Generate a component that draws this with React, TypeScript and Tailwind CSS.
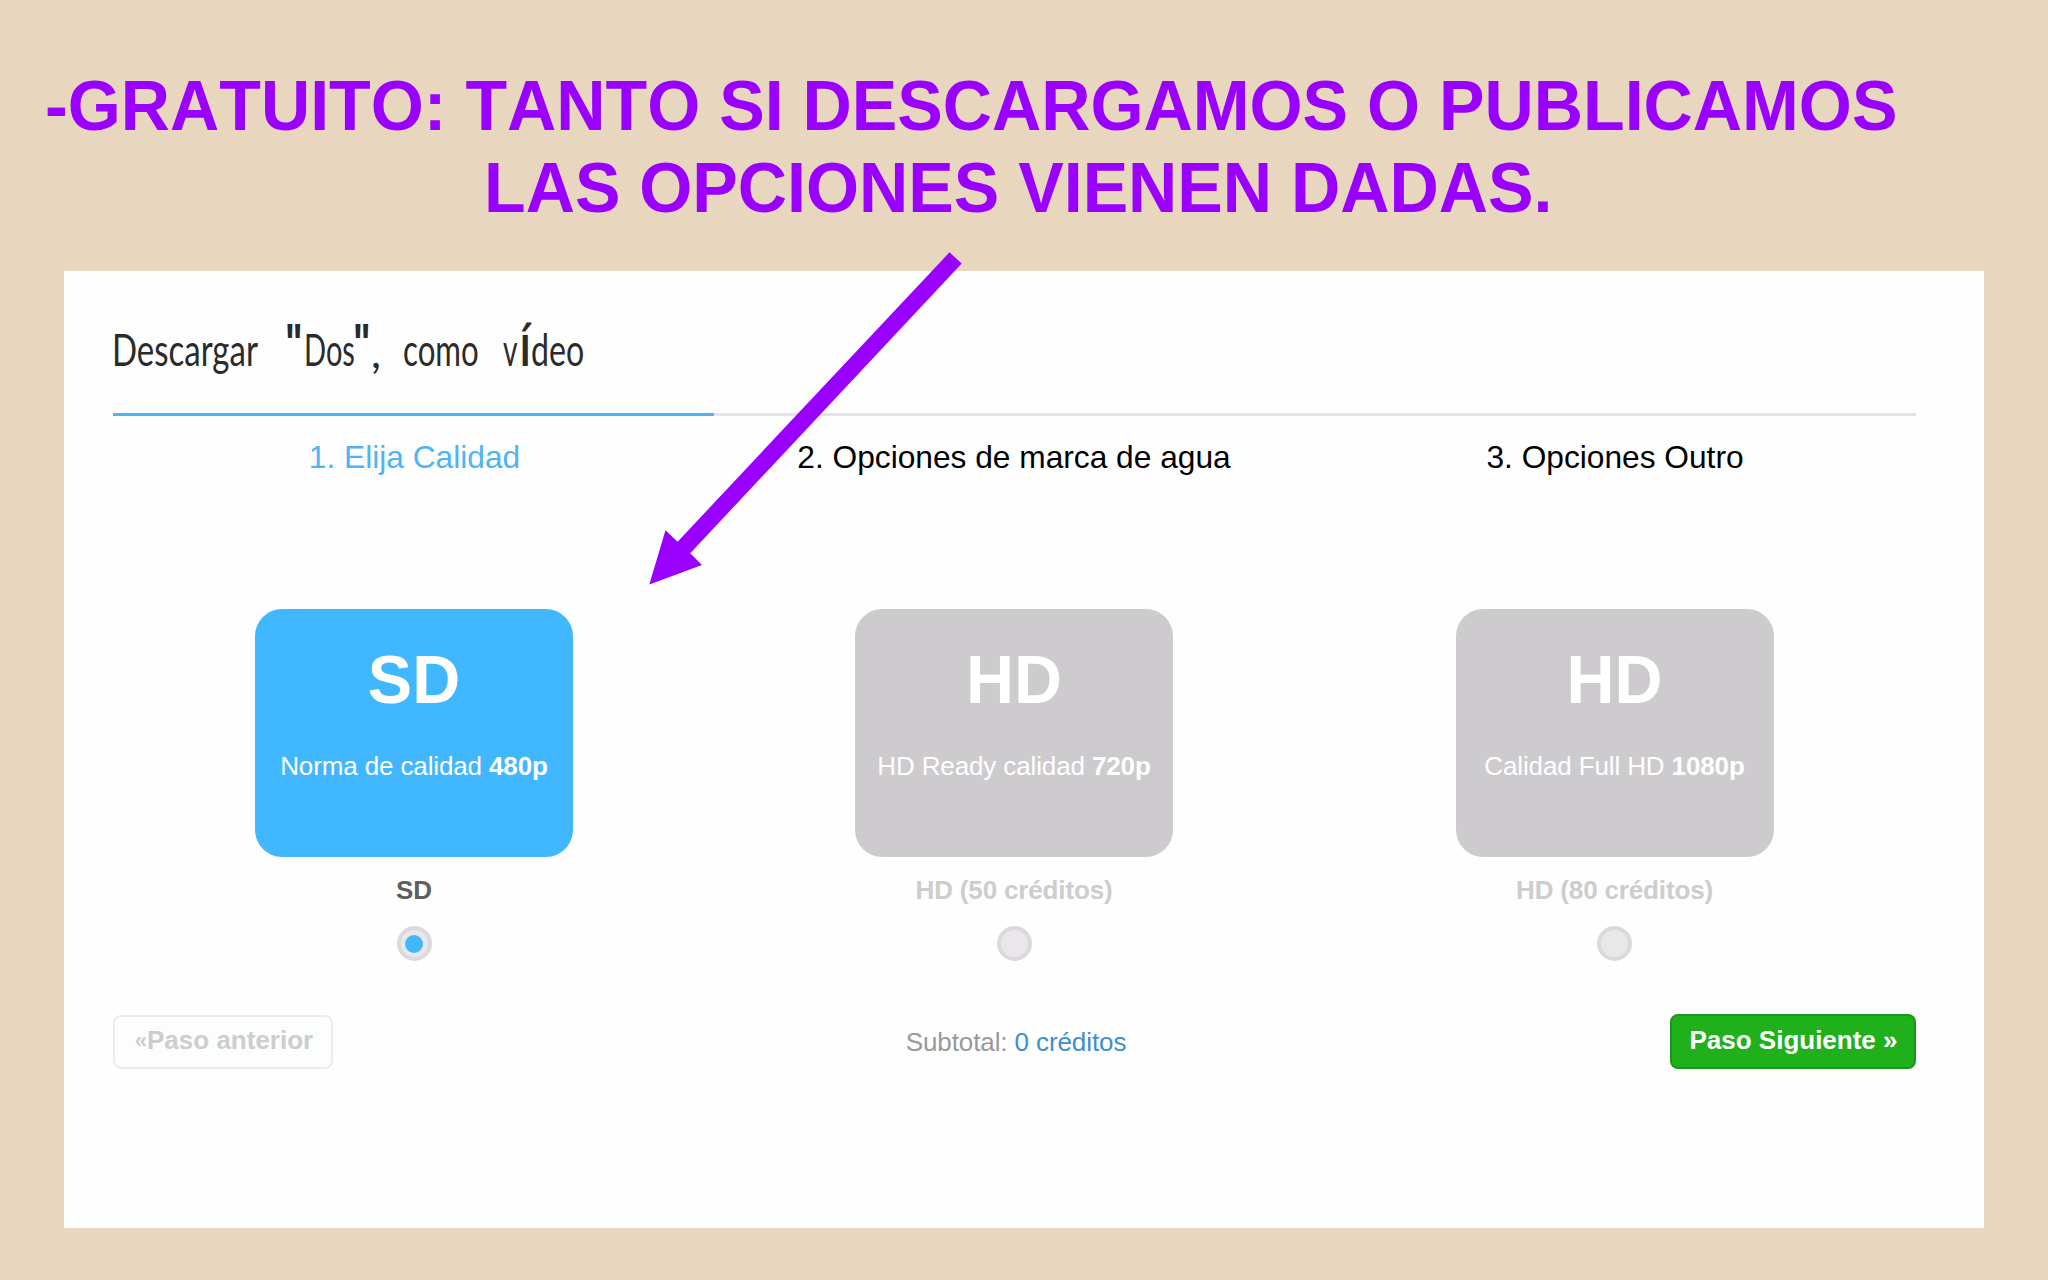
import clsx from "clsx";

type Quality = {
  title: string;
  desc: string;
  res: string;
  label: string;
  selected?: boolean;
};

const steps = ["1. Elija Calidad", "2. Opciones de marca de agua", "3. Opciones Outro"];

const qualities: Quality[] = [
  { title: "SD", desc: "Norma de calidad", res: "480p", label: "SD", selected: true },
  { title: "HD", desc: "HD Ready calidad", res: "720p", label: "HD (50 créditos)" },
  { title: "HD", desc: "Calidad Full HD", res: "1080p", label: "HD (80 créditos)" },
];

function Arrow() {
  return (
    <svg
      className="pointer-events-none absolute left-[649px] top-[252px]"
      width="314"
      height="334"
      viewBox="649 252 314 334"
      aria-hidden="true"
    >
      <path
        d="M949.5 252.3 961.7 263.5 690.2 553.3 702 565 649.3 584.5 665.5 530.3 677.6 541.7Z"
        fill="#9900ff"
      />
    </svg>
  );
}

function Quote() {
  return (
    <span className="inline-block origin-left translate-x-[2px] -translate-y-[6px] scale-x-[0.66] font-['Liberation_Sans',sans-serif] text-[56px] font-bold">
      "
    </span>
  );
}

// narrow handwriting look: each word is squeezed on its own
function PanelTitle() {
  return (
    <h2 className="flex h-[64px] items-start whitespace-pre font-['Lato','Liberation_Sans',sans-serif] text-[44px] leading-[64px] text-[#2b2b2b]">
      <span className="w-[170px]">
        <span className="inline-block origin-left -translate-x-px scale-x-[0.75]">Descargar</span>
      </span>
      <span className="w-[20px]">
        <Quote />
      </span>
      <span className="w-[48px]">
        <span className="inline-block origin-left translate-x-px scale-x-[0.66]">Dos</span>
      </span>
      <span className="w-[20px]">
        <Quote />
      </span>
      <span className="w-[32px] translate-y-[2px]">,</span>
      <span className="w-[100px]">
        <span className="inline-block origin-left scale-x-[0.71]">como</span>
      </span>
      <span className="w-[17px]">
        <span className="inline-block origin-left scale-x-[0.64]">v</span>
      </span>
      <span className="w-[11px]">
        <span className="inline-block origin-left -translate-y-[3px] scale-x-[0.62] font-['Liberation_Sans',sans-serif] text-[60px] font-bold">
          í
        </span>
      </span>
      <span>
        <span className="inline-block origin-left scale-x-[0.73]">deo</span>
      </span>
    </h2>
  );
}

function QualityOption({ title, desc, res, label, selected }: Quality) {
  return (
    <label className="flex flex-col items-center">
      <div
        className={clsx(
          "flex h-[248px] w-[318px] flex-col items-center rounded-[27px] text-white",
          selected ? "bg-[#41b7ff]" : "bg-[#cdcbce]"
        )}
      >
        <div className="mt-[30px] scale-y-[1.03] text-[66.5px] font-bold leading-[80px]">{title}</div>
        <div className="mt-[32px] whitespace-nowrap text-[26px] leading-[30px] tracking-[-0.13px]">
          {desc} <b>{res}</b>
        </div>
      </div>
      <div
        className={clsx(
          "mt-[18px] text-[26px] font-bold leading-[30px] tracking-[-0.15px]",
          selected ? "text-[#5f5f5f]" : "text-[#cdcdcd]"
        )}
      >
        {label}
      </div>
      <span className="mt-[21px] flex size-[35px] items-center justify-center rounded-full border-[4px] border-[#dbd9db] bg-[#e9e7ea]">
        {selected && <span className="size-[18px] rounded-full bg-[#41b7ff]" />}
      </span>
    </label>
  );
}

export default function App() {
  return (
    <div className="relative h-[1280px] w-[2048px] overflow-hidden bg-[#e8d6be] font-['Liberation_Sans',Arial,sans-serif]">
      <div className="h-[271px] pt-[67px]">
        <h1 className="scale-y-[1.03] whitespace-nowrap text-[68.2px] font-bold leading-[79.6px] text-[#9900ff] [font-kerning:none]">
          <span className="block pl-[45px]">-GRATUITO: TANTO SI DESCARGAMOS O PUBLICAMOS</span>
          <span className="block pl-[484px]">LAS OPCIONES VIENEN DADAS.</span>
        </h1>
      </div>

      <main className="mx-[64px] h-[957px] bg-[#fefefe] pl-[49px] pr-[68px] pt-[46px]">
        <PanelTitle />

        <ol className="mt-[32px] grid grid-cols-3 text-center text-[31.7px] leading-[36px]">
          {steps.map((s, i) => (
            <li
              key={s}
              className={clsx(
                "border-t-[3px] pt-[23px]",
                i === 0 ? "border-[#4eb4f3] pl-[2px] text-[#4eb4f3]" : "border-[#e5e3e7] pr-px text-black"
              )}
            >
              {s}
            </li>
          ))}
        </ol>

        <div className="mt-[134px] grid grid-cols-[602px_598px_603px]">
          {qualities.map((q) => (
            <QualityOption key={q.label} {...q} />
          ))}
        </div>

        <div className="mt-[53px] flex items-center justify-between text-[26px]">
          <button className="flex h-[54px] w-[220px] items-center justify-center rounded-[8px] border-2 border-[#ebecec] bg-[#fcfdfd] pb-[2px] pl-[2px] font-bold text-[#cdcdcd]">
            <span className="text-[22px]">«</span>Paso anterior
          </button>
          <div className="pl-[29px] pt-[2px] tracking-[-0.1px] text-[#999]">
            Subtotal: <span className="text-[#3b8fcf]">0 créditos</span>
          </div>
          <button className="flex h-[55px] w-[246px] items-center justify-center rounded-[8px] border-2 border-[#189718] bg-[#20b01c] pb-[2px] pl-px font-bold text-white">
            Paso Siguiente »
          </button>
        </div>
      </main>

      <Arrow />
    </div>
  );
}
